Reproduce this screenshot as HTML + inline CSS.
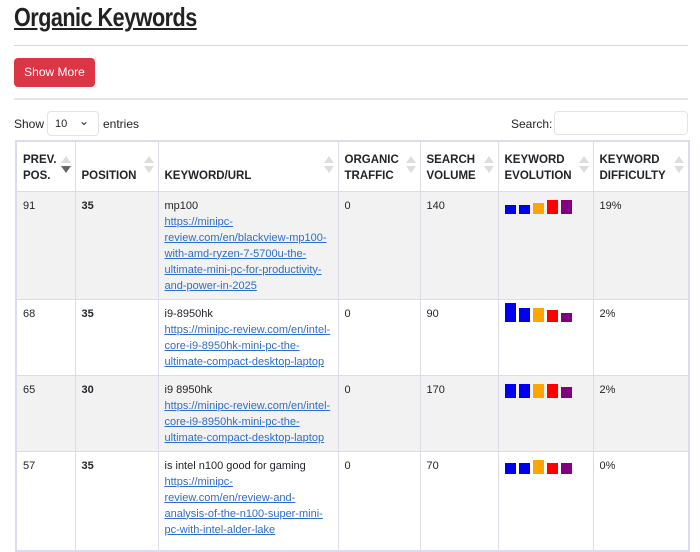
<!DOCTYPE html>
<html><head><style>
*{box-sizing:border-box}
body{margin:0;background:#fff;font-family:"Liberation Sans",sans-serif;font-size:11px;color:#212529;width:700px;height:540px;overflow:hidden;position:relative}
h1{position:absolute;left:14px;top:2px;margin:0;font-family:"Liberation Sans Narrow","Liberation Sans",sans-serif;font-weight:bold;font-size:26px;letter-spacing:-0.6px;text-decoration:underline;color:#222;transform:scaleX(0.83);transform-origin:left}
.hr{position:absolute;left:14px;right:12px;height:1px;background:#d8d8d8}
.btn{position:absolute;left:14px;top:58px;width:81px;height:29px;background:#dc3545;color:#fff;border-radius:4px;font-size:12px;line-height:29px;text-align:center}
.show{position:absolute;left:14px;top:117px;font-size:12px}
.sel{position:absolute;left:47px;top:111px;width:52px;height:25px;border:1px solid #e3e3e3;border-radius:4px;font-size:11px;padding:6px 0 0 7px}
.sel:after{content:"⌄";position:absolute;right:9px;top:2px;font-size:12px}
.ent{position:absolute;left:103px;top:117px;font-size:12px}
.srch{position:absolute;left:511px;top:117px;font-size:12px}
.sbox{position:absolute;left:554px;top:111px;width:134px;height:24px;border:1px solid #e3e3e3;border-radius:4px}
table{position:absolute;left:15px;top:140px;border-collapse:collapse;table-layout:fixed;width:673px;border:2px solid #dcdcf0}
td,th{border:1px solid #dcdce6;vertical-align:top;padding:6px 6px 5px;line-height:16px;text-align:left}
th{vertical-align:bottom;font-weight:bold;font-size:11.5px;height:50px;position:relative;padding:6px 16px 7px 6px}
th:after{content:"";position:absolute;right:4px;top:14px;border:5px solid transparent;border-bottom:7px solid #ddd;border-top:0}
th:before{content:"";position:absolute;right:4px;top:24px;border:5px solid transparent;border-top:7px solid #ddd;border-bottom:0}
th.d:before{border-top-color:#666}
tr.g td{background:#f2f2f2}
a{color:#2a6fc9;text-decoration:underline}
.bars{display:flex;align-items:flex-end;gap:3px;height:20px;margin-top:-4px}
.bars i{display:block;width:11px}
.b{background:#0000f0}.o{background:#ffa500}.r{background:#f00}.p{background:#800080}
</style></head><body>
<h1>Organic Keywords</h1>
<div class="hr" style="top:45px"></div>
<div class="btn">Show More</div>
<div class="hr" style="top:98px;height:2px;background:#e4e4e4"></div>
<div class="show">Show</div><div class="sel">10</div><div class="ent">entries</div>
<div class="srch">Search:</div><div class="sbox"></div>
<table>
<colgroup><col style="width:59px"><col style="width:83px"><col style="width:180px"><col style="width:82px"><col style="width:78px"><col style="width:95px"><col style="width:96px"></colgroup>
<tr><th class="d">PREV.<br>POS.</th><th>POSITION</th><th>KEYWORD/URL</th><th>ORGANIC<br>TRAFFIC</th><th>SEARCH<br>VOLUME</th><th>KEYWORD<br>EVOLUTION</th><th>KEYWORD<br>DIFFICULTY</th></tr>
<tr class="g" style="height:107px"><td>91</td><td><b>35</b></td><td>mp100<br><a>https://minipc-review.com/en/blackview-mp100-with-amd-ryzen-7-5700u-the-ultimate-mini-pc-for-productivity-and-power-in-2025</a></td><td>0</td><td>140</td><td><div class="bars"><i class="b" style="height:9px"></i><i class="b" style="height:9px"></i><i class="o" style="height:11px"></i><i class="r" style="height:14px"></i><i class="p" style="height:14px"></i></div></td><td>19%</td></tr>
<tr style="height:76px"><td>68</td><td><b>35</b></td><td>i9-8950hk<br><a>https://minipc-review.com/en/intel-core-i9-8950hk-mini-pc-the-ultimate-compact-desktop-laptop</a></td><td>0</td><td>90</td><td><div class="bars"><i class="b" style="height:19px"></i><i class="b" style="height:14px"></i><i class="o" style="height:14px"></i><i class="r" style="height:12px"></i><i class="p" style="height:9px"></i></div></td><td>2%</td></tr>
<tr class="g" style="height:76px"><td>65</td><td><b>30</b></td><td>i9 8950hk<br><a>https://minipc-review.com/en/intel-core-i9-8950hk-mini-pc-the-ultimate-compact-desktop-laptop</a></td><td>0</td><td>170</td><td><div class="bars"><i class="b" style="height:14px"></i><i class="b" style="height:14px"></i><i class="o" style="height:14px"></i><i class="r" style="height:14px"></i><i class="p" style="height:11px"></i></div></td><td>2%</td></tr>
<tr style="height:100px"><td>57</td><td><b>35</b></td><td>is intel n100 good for gaming<br><a>https://minipc-review.com/en/review-and-analysis-of-the-n100-super-mini-pc-with-intel-alder-lake</a></td><td>0</td><td>70</td><td><div class="bars"><i class="b" style="height:11px"></i><i class="b" style="height:11px"></i><i class="o" style="height:14px"></i><i class="r" style="height:11px"></i><i class="p" style="height:11px"></i></div></td><td>0%</td></tr>
</table>
</body></html>
